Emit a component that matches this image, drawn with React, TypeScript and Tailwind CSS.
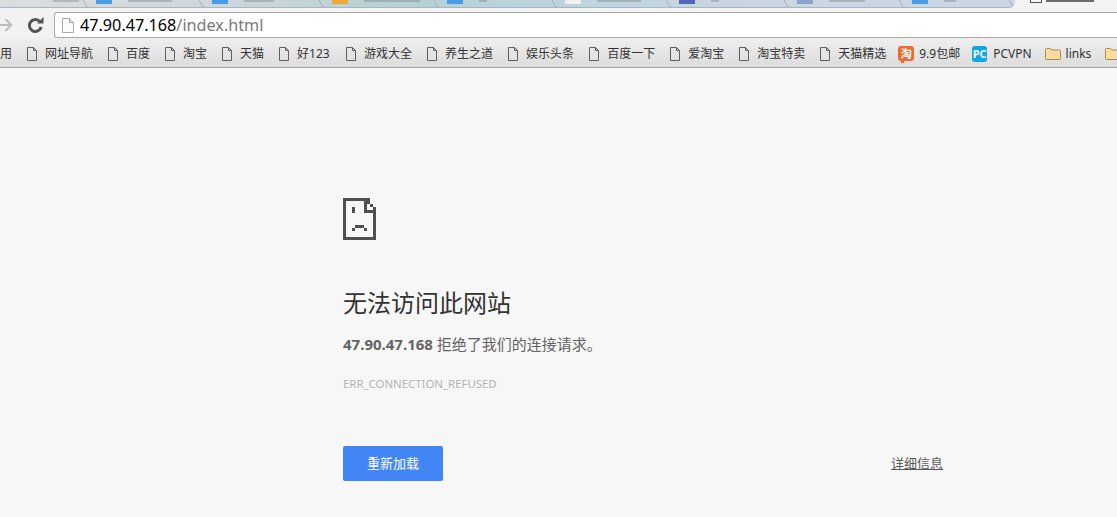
import { ArrowRight } from "lucide-react";

const uiFont = "font-['Noto_Sans','Noto_Sans_CJK_SC',sans-serif]";

const tabs = [
  { width: 89, icon: "", bits: "w-[26px]" },
  { width: 116, icon: "bg-[#4a9be8]", bits: "w-[44px]" },
  { width: 120, icon: "bg-[#4a9be8]", bits: "w-[30px]" },
  { width: 115, icon: "bg-[#f0a838]", bits: "w-[56px]" },
  { width: 118, icon: "bg-[#4a9be8]", bits: "w-[8px]" },
  { width: 114, icon: "bg-[#eef2f4]", bits: "w-[44px]" },
  { width: 118, icon: "bg-[#5566bb]", bits: "w-[8px]" },
  { width: 115, icon: "bg-[#8ea2cc]", bits: "w-[36px]" },
  { width: 110, icon: "bg-[#4a9be8]", bits: "w-[12px]" },
];

const bookmarks = [
  "网址导航",
  "百度",
  "淘宝",
  "天猫",
  "好123",
  "游戏大全",
  "养生之道",
  "娱乐头条",
  "百度一下",
  "爱淘宝",
  "淘宝特卖",
  "天猫精选",
];

function PageIcon() {
  return (
    <svg width="12" height="16" viewBox="0 0 12 16" className="shrink-0">
      <path
        d="M1.500 1.500h6l3 3v10h-9z M7.500 1.500v3h3"
        fill="none"
        stroke="#5f5f5f"
        strokeWidth="1"
      />
    </svg>
  );
}

function FolderIcon() {
  return (
    <svg width="16" height="13" viewBox="0 0 16 13" className="shrink-0">
      <path
        d="M.5 2.500a1 1 0 0 1 1-1h4l1.500 1.500h7.500a1 1 0 0 1 1 1v7.500a1 1 0 0 1-1 1h-13a1 1 0 0 1-1-1z"
        fill="#fbdc9c"
        stroke="#a98a55"
      />
    </svg>
  );
}

function Bookmark({
  icon,
  label,
  gap = "gap-[7px]",
  labelClass = "",
  className = "",
}: {
  icon: React.ReactNode;
  label: string;
  gap?: string;
  labelClass?: string;
  className?: string;
}) {
  return (
    <div className={`flex shrink-0 items-center ${gap} ${className}`}>
      {icon}
      <span className={labelClass}>{label}</span>
    </div>
  );
}

// pixel art from the chrome error page, 3px per cell
function SadPage() {
  return (
    <svg
      width="33"
      height="42"
      viewBox="0 0 11 14"
      shapeRendering="crispEdges"
      fill="#4f4f4f"
    >
      <rect x="0" y="0" width="9" height="1" />
      <rect x="0" y="0" width="1" height="14" />
      <rect x="0" y="13" width="11" height="1" />
      <rect x="10" y="3" width="1" height="11" />
      <rect x="9" y="2" width="1" height="1" />
      <rect x="8" y="1" width="1" height="1" />
      <rect x="7" y="0" width="1" height="4" />
      <rect x="7" y="4" width="4" height="1" />
      <rect x="3" y="3" width="1" height="2" />
      <rect x="4" y="9" width="3" height="1" />
      <rect x="3" y="10" width="1" height="1" />
      <rect x="7" y="10" width="1" height="1" />
    </svg>
  );
}

export default function App() {
  return (
    <div className={`flex h-[517px] w-[1117px] flex-col overflow-hidden bg-[#f7f7f7] ${uiFont}`}>
      <div className="flex h-2 shrink-0">
        <div className="flex flex-1 overflow-hidden rounded-br-[6px] border-b border-[#a9b8bf] bg-[linear-gradient(90deg,#dcdddd_0%,#cdd6dc_22%,#b5d1d3_40%,#bdd4dc_55%,#cad6e2_75%,#cad6e2_100%)]">
          {tabs.map((tab, i) => (
            <div
              key={i}
              className="relative flex h-[7px] shrink-0 items-start gap-[16px] pl-[7px]"
              style={{ width: tab.width }}
            >
              {tab.icon ? (
                <div className={`h-[4px] w-4 ${tab.icon}`} />
              ) : (
                <div className="w-[30px]" />
              )}
              <div className={`h-[2px] bg-[#77808a] opacity-40 ${tab.bits}`} />
              <svg
                width="6"
                height="8"
                viewBox="0 0 6 8"
                className="absolute top-0 right-0"
              >
                <path d="M0 0l4 7h2" fill="none" stroke="#a2b0b9" />
              </svg>
            </div>
          ))}
        </div>
        <div className="flex w-[102px] shrink-0 items-start gap-[4px] bg-[#f4f4f4] pl-[15px]">
          <div className="h-[3px] w-[12px] border-x border-b border-[#555]" />
          <div className="h-[2px] w-[48px] bg-[#333] opacity-70" />
        </div>
      </div>

      <div className="flex h-[30px] shrink-0 items-end bg-[#f2f2f2]">
        <div className="flex h-[26px] w-[54px] shrink-0 items-center">
          <ArrowRight
            size={18}
            strokeWidth={2.800}
            color="#bcbcbc"
            className="-ml-[3px]"
          />
          <svg
            width="18"
            height="18"
            viewBox="0 0 18 18"
            className="ml-[12px]"
          >
            <path
              d="M14.200 11a6 6 0 1 1-1.200-5.400"
              fill="none"
              stroke="#565656"
              strokeWidth="3"
            />
            <path d="M10 7.500h6.500V1z" fill="#565656" />
          </svg>
        </div>
        <div className="flex h-[26px] flex-1 items-center rounded-tl-[3px] rounded-bl-[3px] border border-r-0 border-[#a9a9a9] bg-white pl-[7px]">
          <svg width="12" height="15" viewBox="0 0 12 15">
            <path d="M.5.500h7l4 4v10H.5z" fill="#fbfbfb" stroke="#a8a8a8" />
            <path d="M7.500.500v4h4" fill="#e4e4e4" stroke="#a8a8a8" />
          </svg>
          <span className="ml-[6px] text-[16.200px] leading-none text-black">
            47.90.47.168
            <span className="text-[#7a7a7a]">/index.html</span>
          </span>
        </div>
      </div>

      <div className="flex h-[30px] shrink-0 items-center gap-[14px] overflow-hidden border-b border-[#a3a3a3] bg-[linear-gradient(180deg,#efefef,#dcdcdc)] pt-[2px] text-[12px] whitespace-nowrap text-[#333]">
        <span className="shrink-0">用</span>
        {bookmarks.map((label) => (
          <Bookmark
            key={label}
            icon={<PageIcon />}
            label={label}
            labelClass={label === "好123" ? "w-[34px]" : ""}
          />
        ))}
        <Bookmark
          className="-ml-[2px]"
          gap="gap-[5px]"
          label="9.9包邮"
          icon={
            <span className="relative flex h-[15px] w-4 shrink-0 items-center justify-center rounded-[3px] bg-[#f26a2e] text-[11px] leading-none font-bold text-white">
              淘
              <span className="absolute -bottom-[2px] left-[3px] h-[3px] w-[3px] bg-[#f26a2e]" />
            </span>
          }
        />
        <Bookmark
          className="-ml-[2px]"
          gap="gap-[6px]"
          label="PCVPN"
          icon={
            <span className="flex h-4 w-[15px] shrink-0 items-center justify-center rounded-[3px] bg-[#0da6e6] text-[11px] leading-none font-bold text-white">
              PC
            </span>
          }
        />
        <Bookmark
          className="-ml-[1px]"
          icon={<FolderIcon />}
          label="links"
          gap="gap-[5px]"
        />
        <FolderIcon />
      </div>

      <main className="flex-1 pt-[130px] pl-[343px]">
        <div className="w-[600px]">
          <SadPage />
          <h1 className="mt-[46px] text-[24px] leading-[34px] font-normal text-[#333]">
            无法访问此网站
          </h1>
          <p className="mt-[13px] text-[15px] leading-[22px] text-[#646464]">
            <strong className="font-bold">47.90.47.168</strong> 拒绝了我们的连接请求。
          </p>
          <div className="mt-[21px] text-[11.400px] leading-[16px] text-[#b4b4b4]">
            ERR_CONNECTION_REFUSED
          </div>
          <div className="mt-[54px] flex items-center justify-between">
            <button className="h-[35px] w-[100px] rounded-[2px] bg-[#4285f4] text-[13px] text-white">
              重新加载
            </button>
            <a className="text-[13px] text-[#5a5a5a] underline">详细信息</a>
          </div>
        </div>
      </main>
    </div>
  );
}
